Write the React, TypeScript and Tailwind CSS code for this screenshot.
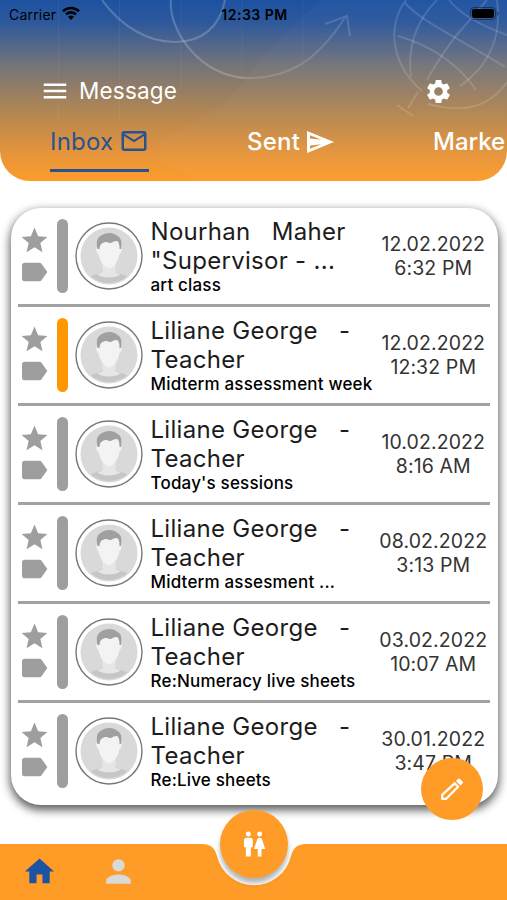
import React from 'react'
import {
  MdHome,
  MdLabel,
  MdMenu,
  MdOutlineMail,
  MdPerson,
  MdSettings,
  MdStar,
  MdWc,
} from 'react-icons/md'

type Message = {
  name: string[]
  subject: string
  date: string
  time: string
  unread?: boolean
}

const messages: Message[] = [
  { name: ['Nourhan   Maher', '"Supervisor - ...'], subject: 'art class', date: '12.02.2022', time: '6:32 PM' },
  { name: ['Liliane George   -', 'Teacher'], subject: 'Midterm assessment week', date: '12.02.2022', time: '12:32 PM', unread: true },
  { name: ['Liliane George   -', 'Teacher'], subject: "Today's sessions", date: '10.02.2022', time: '8:16 AM' },
  { name: ['Liliane George   -', 'Teacher'], subject: 'Midterm assesment ...', date: '08.02.2022', time: '3:13 PM' },
  { name: ['Liliane George   -', 'Teacher'], subject: 'Re:Numeracy live sheets', date: '03.02.2022', time: '10:07 AM' },
  { name: ['Liliane George   -', 'Teacher'], subject: 'Re:Live sheets', date: '30.01.2022', time: '3:47 PM' },
]

function StatusBar() {
  return (
    <div className="grid h-7 grid-cols-3 items-center pl-[9px] pr-[7px] text-[14px] text-black">
      <div className="flex items-center gap-[6px]">
        <span className="tracking-[0.2px]">Carrier</span>
        <svg className="-mt-[3px]" width="18" height="14" viewBox="0 0 18 14" fill="none" stroke="currentColor" strokeWidth="2.6">
          <path d="M1 5.2a11.5 11.5 0 0 1 16 0" />
          <path d="M4 8.4a7.2 7.2 0 0 1 10 0" />
          <path d="M9 14 6 10.8a4.4 4.4 0 0 1 6 0z" fill="currentColor" stroke="none" />
        </svg>
      </div>
      <span className="text-center font-semibold tracking-[0.5px]">12:33 PM</span>
      <svg className="-mt-[2px] justify-self-end" width="30" height="13" viewBox="0 0 30 13">
        <rect x="0.5" y="0.5" width="25" height="12" rx="3.5" fill="none" stroke="#000" strokeOpacity="0.4" />
        <rect x="2" y="2" width="22" height="9" rx="2" />
        <path d="M27 4.5v4c1-.3 1.6-1 1.6-2s-.6-1.7-1.6-2z" fillOpacity="0.4" />
      </svg>
    </div>
  )
}

function HeaderArt() {
  return (
    <svg className="absolute inset-0" width="507" height="181" viewBox="0 0 507 181" fill="none" stroke="#fff">
      <path d="M321 0C290 28 270 48 253 70 228 103 195 126 160 139v24l40 18h307V0z" fill="#fff" fillOpacity="0.025" stroke="none" />
      <path d="M58.5 0v120M119.5 0v120M181 0v90M242 0v70M303 0v70" strokeOpacity="0.05" />
      {/* Circles and arrow */}
      <g strokeOpacity="0.2" strokeWidth="2.2">
        <path d="M102 0C121 26 147 42 175 42c27 0 45-15 50-42" />
        <path d="M171 0c-3 29 28 76 75 78" />
        <path d="M246 78c45 1 73-20 100-62M325 24l22-8 3 20" strokeOpacity="0.14" />
      </g>
      {/* Globe */}
      <g strokeOpacity="0.14" strokeWidth="2">
        <path d="M406 0Q395 14 394 35C395 60 407 78 422 91" />
        <path d="M437 0C417 20 407 45 411 77M487 0 455 37Q438 60 427 80M497 0C502 35 490 65 460 86" />
        <path d="M405 3C422 22 455 36 505 67M398 36C433 46 460 66 476 90M449 0Q465 20 507 35" />
        <path d="m418 92-10 16M397 105l16 11M428 104c33 9 60 5 79-22" />
      </g>
    </svg>
  )
}

function SendIcon() {
  return (
    <svg className="mt-[6px] shrink-0" width="27" height="24" viewBox="0 0 27 24" fill="currentColor" fillRule="evenodd">
      <path d="M0 1v22l27-11zM3 5.2 14.5 9.800 3 8.400zM3 15.600 14.500 14.200 3 18.800z" />
    </svg>
  )
}

function PencilIcon() {
  return (
    <svg width="24" height="24" viewBox="0 0 24 24">
      <path d="M2.2 21.8v-4L14.7 6.3l3.4 3.4L6.2 21.8z" fill="none" stroke="currentColor" strokeWidth="2.3" strokeLinejoin="round" />
      <path d="m16 4 2-2a1.5 1.5 0 0 1 2 0l2.500 2.500a1.500 1.500 0 0 1 0 2l-2 2z" fill="currentColor" />
    </svg>
  )
}

function Header() {
  return (
    <header className="relative h-[181px] overflow-hidden rounded-b-[30px] bg-[linear-gradient(180deg,#1d52a1_0%,#2c589c_12%,#74747a_36%,#b48751_63%,#e4943c_84%,#fd9c2a_100%)]">
      <HeaderArt />
      <div className="relative">
        <StatusBar />

        {/* Title row */}
        <div className="mt-[45px] flex h-9 items-center pl-[40px] pr-[54px] text-white">
          <MdMenu size={30} />
          <h1 className="ml-[9px] flex-1 text-[22.5px] tracking-[0.2px]">Message</h1>
          <MdSettings size={29} />
        </div>

        {/* Tabs */}
        <nav className="mt-[15px] flex text-[24px] font-medium text-white">
          <div className="ml-[50px] flex h-12 w-[99px] shrink-0 gap-[6px] border-b-[3px] border-[#2a5291] text-[#2a5291]">
            <span className="leading-9 font-normal tracking-[0.2px]">Inbox</span>
            <MdOutlineMail size={30} className="mt-[2px] shrink-0" />
          </div>
          <div className="ml-[98px] flex shrink-0 gap-[7px]">
            <span className="leading-9 tracking-[0.2px]">Sent</span>
            <SendIcon />
          </div>
          <span className="ml-[99px] leading-9">Marke</span>
        </nav>
      </div>
    </header>
  )
}

function Avatar() {
  return (
    <svg className="ml-[7px] shrink-0" width="68" height="68" viewBox="0 0 68 68">
      <circle cx="34" cy="34" r="33" fill="#fff" stroke="#777" strokeWidth="1.4" />
      <circle cx="34" cy="34" r="28.5" fill="#d9d9d9" />
      <path d="M16 54.5C18 52 27 52 27 49h14c0 3 9 3 11 5.5a28.5 28.5 0 0 1-36 0z" fill="#c6c6c6" />
      <path d="M27.5 42h13v7c0 2 3 2.5 5 3.3-5 4.3-18 4.3-23 0 2-.8 5-1.300 5-3.300z" fill="#e6e6e6" />
      <path d="M22.500 25c-2 0-1.500 6 1 7 1.500 8 6 14 10.500 14s9-6 10.500-14c2.500-1 3-7 1-7l-2-9H24z" fill="#f3f3f3" />
      <path d="M22.500 27c-1.500-7-.500-11 3-13 5-4 13-4 17 0 4 2 4.500 6 3.500 13h-1.500c0-4-.500-7-2.500-8-5 0-6 4-10 1-5 0-7 2-7.500 7z" fill="#a0a0a0" />
    </svg>
  )
}

function MessageRow({ message }: { message: Message }) {
  return (
    <li className="flex h-[99px] items-center border-b-[3px] border-[#a2a2a2] last:border-transparent">
      <div className="flex w-8 shrink-0 flex-col items-center text-[#9e9e9e]">
        <MdStar size={31} />
        <MdLabel size={32} />
      </div>
      <div className={message.unread ? 'ml-[7px] h-[74px] w-[11px] shrink-0 rounded-full bg-[#ff9800]' : 'ml-[7px] h-[74px] w-[11px] shrink-0 rounded-full bg-[#9e9e9e]'} />
      <Avatar />
      <div className="ml-[7.5px] w-[225px] shrink-0 whitespace-pre text-black">
        <p className="text-[24px] leading-[29px] tracking-[0.3px] text-[#1c1c1c]">{message.name[0]}</p>
        <p className="text-[24px] leading-[29px] tracking-[0.3px] text-[#1c1c1c]">{message.name[1]}</p>
        <p className="text-[17px] leading-5 font-medium tracking-[0.18px]">{message.subject}</p>
      </div>
      <div className="flex-1 whitespace-nowrap pl-px pt-px text-center text-[19.5px] leading-[23.5px] tracking-[0.1px] text-[#333]">
        <p>{message.date}</p>
        <p>{message.time}</p>
      </div>
    </li>
  )
}

function BottomBar() {
  return (
    <footer className="relative h-[57px] text-[#d9d9d9]">
      <svg className="absolute inset-0" width="507" height="57" viewBox="0 0 507 57" fill="#ff9c28">
        <path d="M0 1h202c10 0 13 5 15 12a38 38 0 0 0 74 0c2-7 5-12 15-12h201v56H0z" />
      </svg>
      <div className="relative flex h-full items-center pl-[22px]">
        <MdHome size={35} className="text-[#1c54a3]" />
        <MdPerson size={37} className="ml-[43px]" />
      </div>
      <button className="absolute -top-[33px] left-[220px] flex size-[68px] items-center justify-center rounded-full bg-[#ff9c28] text-white shadow-[0_5px_5px_rgba(0,0,0,0.3)]">
        <MdWc size={30} />
      </button>
    </footer>
  )
}

function App() {
  return (
    <div className="flex h-[900px] w-[507px] flex-col overflow-hidden bg-white font-['Inter',sans-serif]">
      <Header />
      <main className="relative flex-1">
        <ul className="mr-[9px] ml-[11px] mt-[27px] h-[597px] rounded-[30px] bg-white pl-[7px] pr-2 shadow-[0_4px_10px_1px_rgba(0,0,0,0.65)]">
          {messages.map((message) => (
            <MessageRow key={message.date + message.time} message={message} />
          ))}
        </ul>
        <button className="absolute right-[24px] bottom-[23px] flex size-[62px] items-center justify-center rounded-full bg-[#ff9c28] text-white">
          <PencilIcon />
        </button>
      </main>
      <BottomBar />
    </div>
  )
}

export default App
